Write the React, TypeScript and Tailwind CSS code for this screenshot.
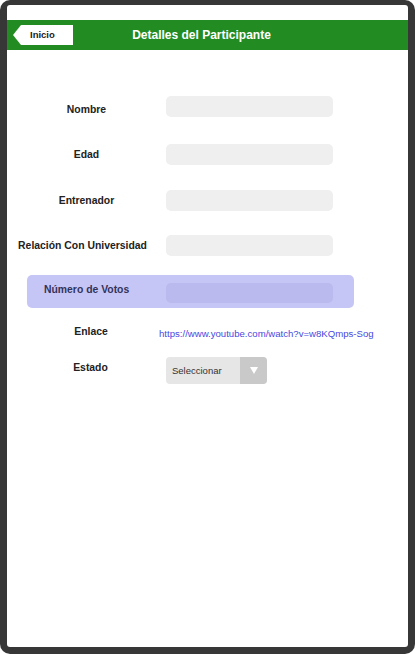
const font = { fontFamily: '"Liberation Sans", Arial, sans-serif' }

function Field({ label, shift = 0, left = 0 }: { label: string; shift?: number; left?: number }) {
  return (
    <div className="flex h-[21px] items-center">
      <div
        style={{ marginTop: shift, paddingRight: left }}
        className="w-[159px] text-center text-[10.4px] font-bold text-[#222]"
      >
        {label}
      </div>
      <div className="h-[21px] w-[167px] rounded-[5px] bg-[#efefef]" />
    </div>
  )
}

export default function App() {
  return (
    <div style={font} className="h-[654px] w-[415px] rounded-[10px] bg-[#373737] px-[7px] pb-[7px] pt-[5px]">
      <div className="h-full w-full rounded-[3px] bg-white pt-[15px]">
        <header className="relative flex h-[30px] items-center justify-center bg-[#228b22]">
          <div className="absolute left-[6px] top-[5px] flex h-[20px] w-[60px] items-center bg-white pl-[17px] text-[9.5px] font-bold text-[#222] [clip-path:polygon(8px_0,100%_0,100%_100%,8px_100%,0_50%)]">
            Inicio
          </div>
          <h1 className="-ml-[12px] text-[12px] font-bold text-white">Detalles del Participante</h1>
        </header>

        <div className="mt-[46px] flex flex-col">
          <Field label="Nombre" shift={7} />
          <div className="mt-[27px]">
            <Field label="Edad" />
          </div>
          <div className="mt-[25px]">
            <Field label="Entrenador" />
          </div>
          <div className="mt-[24px]">
            <Field label="Relación Con Universidad" left={8} />
          </div>

          <div className="ml-[20px] mt-[19px] flex h-[33px] w-[327px] items-start rounded-[5px] bg-[#c6c6f6]">
            <div className="w-[139px] pl-[17px] pt-[7px] text-[10.4px] font-bold text-[#33335a]">Número de Votos</div>
            <div className="mt-[8px] h-[20px] w-[167px] rounded-[5px] bg-[#babaee]" />
          </div>

          <div className="mt-[16px] flex items-start">
            <div className="w-[152px] pl-[16px] text-center text-[10.4px] font-bold text-[#222]">Enlace</div>
            <div className="mt-[3px] text-[9.6px] text-[#4848e0]">https://www.youtube.com/watch?v=w8KQmps-Sog</div>
          </div>

          <div className="mt-[16px] flex items-start">
            <div className="w-[159px] pl-[8px] pt-[3px] text-center text-[10.4px] font-bold text-[#222]">Estado</div>
            <div className="flex h-[27px] w-[101px] overflow-hidden rounded-[4px] bg-[#e6e6e6]">
              <div className="flex flex-1 items-center pl-[6px] text-[9.5px] text-[#333]">Seleccionar</div>
              <div className="flex w-[27px] items-center justify-center bg-[#c9c9c9]">
                <div className="h-0 w-0 border-x-[4px] border-t-[7px] border-x-transparent border-t-white" />
              </div>
            </div>
          </div>
        </div>
      </div>
    </div>
  )
}
